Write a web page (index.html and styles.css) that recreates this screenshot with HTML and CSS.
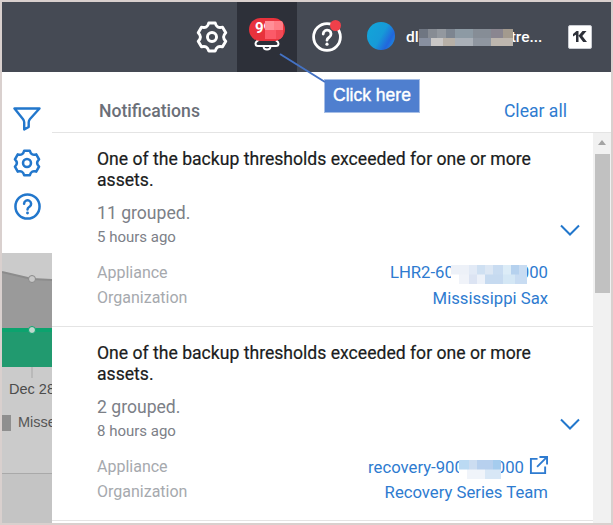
FILE: index.html
```html
<!DOCTYPE html>
<html lang="en">
<head>
<meta charset="utf-8">
<title>Notifications</title>
<link rel="stylesheet" href="styles.css">
</head>
<body>
<svg class="defs" width="0" height="0" aria-hidden="true">
  <defs>
    <symbol id="gear" viewBox="0 0 24 24">
      <path fill="none" stroke="currentColor" stroke-width="2.2" stroke-linejoin="round" d="M9.570 1.480L14.430 1.480Q15.500 5.940 19.900 4.630L22.330 8.840Q19 12 22.330 15.160L19.900 19.370Q15.500 18.060 14.430 22.520L9.570 22.520Q8.500 18.060 4.100 19.370L1.670 15.160Q5 12 1.670 8.840L4.100 4.630Q8.500 5.940 9.570 1.480Z"/>
      <circle cx="12" cy="12" r="3.400" fill="none" stroke="currentColor" stroke-width="2.200"/>
    </symbol>
    <symbol id="help" viewBox="0 0 30 30">
      <circle cx="15" cy="15" r="13.400" fill="none" stroke="currentColor" stroke-width="2.800"/>
      <path fill="none" stroke="currentColor" stroke-width="2.800" stroke-linecap="round" d="M11.200 12a3.900 3.900 0 1 1 6 3.300c-1.400.9-2.200 1.500-2.200 2.900"/>
      <circle cx="15" cy="22.200" r="1.600" fill="currentColor"/>
    </symbol>
    <symbol id="chev" viewBox="0 0 20 12">
      <path fill="none" stroke="currentColor" stroke-width="2" d="M1 1.500l9 9 9-9"/>
    </symbol>
  </defs>
</svg>

<div class="frame">
  <header class="topbar">
    <svg class="top-gear"><use href="#gear"/></svg>
    <div class="bell-cell">
      <svg class="bell" viewBox="0 0 30 20">
        <path fill="none" stroke="#fff" stroke-width="2" d="M8 2V5C8 7 3.500 8 3.500 10.500 3.500 12.500 5 13 6 13H24C25 13 26.500 12.500 26.500 10.500 26.500 8 22 7 22 5V2"/>
        <path fill="none" stroke="#fff" stroke-width="1.800" d="M11.500 13.500c0 4 7 4 7 0"/>
      </svg>
      <span class="badge">99<span class="badge-blur"></span></span>
    </div>
    <div class="help-wrap">
      <svg class="top-help"><use href="#help"/></svg>
      <span class="help-dot"></span>
    </div>
    <span class="avatar"></span>
    <span class="user">dl<span class="mask mask-user"></span>tre...</span>
    <span class="logo">
      <svg viewBox="0 0 14 11" width="14" height="11"><path fill="#2d3039" d="M0 3L3.500 0H5.500V11H3V3.800L0 5.600zM5.500 4.800L9.500 0H13.500L9.300 4.900 14 11H10.200z"/></svg>
    </span>
  </header>

  <div class="body">
    <aside class="side">
      <div class="side-tools">
        <svg class="tool-funnel" viewBox="0 0 28 24"><path fill="none" stroke="currentColor" stroke-width="2.400" stroke-linejoin="round" d="M1.500 1.500h25L17 12c-1 1.200-1.300 2-1.300 3.200V20l-4.500 2.500v-7.300c0-1.200-.4-2-1.300-3.200z"/></svg>
        <svg class="tool-gear"><use href="#gear"/></svg>
        <svg class="tool-help"><use href="#help"/></svg>
      </div>
      <div class="chart">
        <svg class="plot" viewBox="0 0 50 125" width="50" height="125">
          <path fill="#9a9a9a" d="M0 19L30 26 50 27V77H0z"/>
          <path fill="none" stroke="#8c8c8c" stroke-width="2" d="M0 19L30 26 50 27"/>
          <rect y="75" width="50" height="39" fill="#219a6f"/>
          <rect y="75" width="50" height="4" fill="#0ca36e"/>
          <circle cx="30" cy="26" r="3.500" fill="#c8c8c8" stroke="#8a8a8a"/>
          <circle cx="30" cy="77" r="3.500" fill="#c0d8ce" stroke="#0ca36e"/>
          <rect x="29.500" y="114" width="1" height="11" fill="#a8a8a8"/>
        </svg>
        <div class="axis">Dec 28</div>
        <div class="legend"><span class="swatch"></span><span>Missed</span></div>
        <div class="chart-foot"></div>
      </div>
    </aside>

    <main class="panel">
      <div class="panel-head">
        <span class="panel-title">Notifications</span>
        <a class="clear">Clear all</a>
      </div>
      <div class="panel-body">
        <div class="list">
          <article class="item">
            <div class="item-main">
              <p class="msg">One of the backup thresholds exceeded for one or more assets.</p>
              <p class="grouped">11 grouped.</p>
              <p class="time">5 hours ago</p>
              <dl class="meta">
                <dt>Appliance</dt>
                <dd>LHR2-60<span class="mask mask-a"></span>000</dd>
                <dt>Organization</dt>
                <dd>Mississippi Sax</dd>
              </dl>
            </div>
            <svg class="chev"><use href="#chev"/></svg>
          </article>
          <article class="item">
            <div class="item-main">
              <p class="msg">One of the backup thresholds exceeded for one or more assets.</p>
              <p class="grouped">2 grouped.</p>
              <p class="time">8 hours ago</p>
              <dl class="meta">
                <dt>Appliance</dt>
                <dd>recovery-900<span class="mask mask-b"></span>000<svg class="ext" viewBox="0 0 20 20"><path fill="none" stroke="currentColor" stroke-width="2" d="M9 3H2v15h15v-7M11 1h8v8M19 1L8.500 11.500"/></svg></dd>
                <dt>Organization</dt>
                <dd>Recovery Series Team</dd>
              </dl>
            </div>
            <svg class="chev"><use href="#chev"/></svg>
          </article>
        </div>
        <div class="scroll">
          <span class="scroll-up"></span>
          <span class="scroll-thumb"></span>
        </div>
      </div>
    </main>
  </div>

  <div class="callout">Click here</div>
  <svg class="callout-line" viewBox="0 0 50 32" width="50" height="32"><path d="M1 1L46 29" stroke="#4472c4" stroke-width="2"/></svg>
</div>
</body>
</html>
```

FILE: styles.css
```css
* { box-sizing: border-box; }
html, body { margin: 0; padding: 0; }
body { font-family: Roboto, "Liberation Sans", sans-serif; }
.defs { position: absolute; }
p, dl, dd, dt { margin: 0; }

.frame {
  position: relative;
  width: 613px;
  height: 525px;
  padding: 2px;
  background: #d9d0ce;
  display: flex;
  flex-direction: column;
  overflow: hidden;
}

.topbar {
  flex: none;
  height: 70px;
  background: #454a54;
  color: #fff;
  display: flex;
  align-items: center;
}
.top-gear { width: 32px; height: 32px; margin-left: 194px; }
.bell-cell {
  position: relative;
  width: 60px;
  height: 70px;
  margin-left: 9px;
  background: #2d3039;
}
.bell { position: absolute; left: 15px; top: 31px; width: 30px; height: 20px; }
.badge {
  position: absolute;
  left: 12px;
  top: 16px;
  width: 36px;
  height: 23px;
  padding-left: 6px;
  border-radius: 12px;
  background: #e8323c;
  color: #fff;
  font-size: 15px;
  font-weight: 700;
  line-height: 20px;
  overflow: hidden;
}
.badge-blur {
  position: absolute;
  left: 16px;
  top: 3px;
  width: 18px;
  height: 18px;
  background:
    linear-gradient(90deg, #ff8f97 0 50%, #ff7d85 50%) top / 100% 50% no-repeat,
    linear-gradient(90deg, #fb5a68 0 60%, #f24a56 60%) bottom / 100% 50% no-repeat;
}
.help-wrap { position: relative; width: 30px; height: 30px; margin-left: 15px; margin-bottom: 1px; }
.top-help { display: block; width: 30px; height: 30px; }
.help-dot {
  position: absolute;
  left: 18px;
  top: -2px;
  width: 11px;
  height: 11px;
  border-radius: 50%;
  background: #f0404a;
}
.avatar {
  width: 28px;
  height: 28px;
  margin-left: 25px;
  margin-bottom: 2px;
  border-radius: 50%;
  background: linear-gradient(120deg, #12a6d8 0%, #169ad8 50%, #2266dd 75%, #17a0dd 100%);
}
.user {
  margin-left: 11px;
  width: 142px;
  font-size: 15.500px;
  font-weight: 500;
  white-space: nowrap;
  display: flex;
  align-items: center;
}
.logo {
  width: 24px;
  height: 24px;
  margin-left: 20px;
  margin-bottom: 1px;
  background: #fff;
  border: 1px solid #c9ccd2;
  border-radius: 2px;
  display: flex;
  align-items: center;
  justify-content: center;
}

.mask { position: relative; display: inline-block; vertical-align: middle; }
.mask-user {
  width: 94px;
  height: 17px;
  margin-right: -2px;
  background:
    linear-gradient(90deg, #6f7682 0 9px, #878c94 9px 18px, #93989f 18px 27px, #7d8590 27px 36px, #8d9aa4 36px 54px, #868d96 54px 72px, #8a8690 72px 84px, #a39a8e 84px) top / 100% 55% no-repeat,
    linear-gradient(90deg, #8890a0 0 12px, #c9c7c6 12px 24px, #b7b0a7 24px 36px, #aab0b8 36px 54px, #8f96a0 54px 72px, #bdb6ae 72px);
}
.mask-a {
  width: 76px;
  height: 19px;
  margin: 0 -7px 0 -3px;
  background:
    linear-gradient(90deg, #edf1f8 0 18px, #e2eaf6 18px 26px, #cfe0f2 26px 34px, #dce7f4 34px 42px, #c9dcf1 42px 52px, #dcecf7 52px 60px, #b5d1ee 60px 68px, #c8dcf2 68px) top / 100% 50% no-repeat,
    linear-gradient(90deg, #fff 0 8px, #f0f3f9 8px 18px, #dce4f3 18px 26px, #ecf1f9 26px 34px, #c6daf0 34px 52px, #d4e7f5 52px 64px, #c8dcf2 64px);
}
.mask-b {
  width: 42px;
  height: 19px;
  margin: 0 -5px;
  background:
    linear-gradient(90deg, #bbdaf3 0 10px, #ccddf1 10px 18px, #b7d0ee 18px 34px, #a5ccee 34px) top / 100% 50% no-repeat,
    linear-gradient(90deg, #fff 0 8px, #f0f4fa 8px 26px, #d8e7f6 26px);
}

.body { flex: 1; min-height: 0; display: flex; }
.side { flex: none; width: 50px; background: #fff; display: flex; flex-direction: column; }
.side-tools {
  flex: none;
  height: 181px;
  padding-top: 35px;
  display: flex;
  flex-direction: column;
  align-items: center;
  color: #2277cc;
}
.tool-funnel { flex: none; width: 28px; height: 24px; }
.tool-gear { flex: none; width: 28px; height: 28px; margin-top: 18px; }
.tool-help { flex: none; width: 27px; height: 27px; margin-top: 16px; }

.chart {
  flex: 1;
  min-height: 0;
  background: #cbcbcb;
  display: flex;
  flex-direction: column;
  color: #4c4c4c;
  font-family: "Liberation Sans", sans-serif;
  font-size: 14.500px;
  overflow: hidden;
  white-space: nowrap;
}
.plot { flex: none; display: block; }
.axis { margin: 1px 0 0 7px; line-height: 20px; }
.legend { margin-top: 15px; display: flex; gap: 7px; align-items: center; color: #555; line-height: 17px; }
.swatch { flex: none; width: 9px; height: 16px; background: #8f8f8f; }
.chart-foot { flex: 1; margin-top: 42px; background: #c4c4c4; border-top: 1px solid #a9a9a9; }

.panel { flex: 1; min-width: 0; background: #fff; display: flex; flex-direction: column; }
.panel-head {
  flex: none;
  height: 61px;
  padding: 0 44px 11px 47px;
  border-bottom: 1px solid #e4e4e4;
  display: flex;
  justify-content: space-between;
  align-items: flex-end;
}
.panel-title { font-size: 17.600px; font-weight: 500; color: #6b6f78; line-height: 20px; }
.clear { font-size: 17.600px; color: #2e7bd0; line-height: 20px; }

.panel-body { flex: 1; min-height: 0; display: flex; }
.list { flex: 1; min-width: 0; overflow: hidden; }
.item {
  height: 194px;
  padding: 0 13px 0 45px;
  border-bottom: 1px solid #e4e4e4;
  display: flex;
  align-items: center;
  gap: 12px;
}
.item-main { flex: 1; min-width: 0; align-self: flex-start; padding-top: 16px; }
.msg { font-size: 17.600px; font-weight: 400; line-height: 21px; color: #1a1c20; -webkit-text-stroke: 0.2px #1a1c20; }
.grouped { margin-top: 12px; font-size: 17.600px; line-height: 20px; color: #7c8087; }
.time { margin-top: 4px; font-size: 15px; line-height: 20px; color: #7c8087; }
.meta {
  margin-top: 13px;
  display: grid;
  grid-template-columns: auto 1fr;
  grid-auto-rows: 25px;
  align-items: center;
  font-size: 16px;
}
.meta dt { color: #a6a9ae; }
.meta dd {
  padding-top: 2px;
  color: #2e7bd0;
  font-size: 16.700px;
  text-align: right;
  white-space: nowrap;
}
.ext { width: 19px; height: 19px; margin-left: 5px; vertical-align: -2px; }
.chev { flex: none; width: 20px; height: 12px; color: #2277cc; }

.scroll { position: relative; flex: none; width: 18px; background: #f1f1f1; padding-top: 21px; }
.scroll-up {
  position: absolute;
  left: 5px;
  top: 7px;
  width: 0;
  height: 0;
  border: 4.500px solid transparent;
  border-top: 0;
  border-bottom: 5px solid #a3a3a3;
}
.scroll-thumb { display: block; margin: 0 1px 0 2px; height: 139px; background: #c1c1c1; }

.callout {
  position: absolute;
  left: 324px;
  top: 79px;
  width: 96px;
  height: 34px;
  background: #4f7fcf;
  border: 1px solid #a6bee6;
  color: #fff;
  font-family: "Liberation Sans", sans-serif;
  font-size: 17.500px;
  font-weight: 400;
  line-height: 31px;
  text-align: center;
  -webkit-text-stroke: 0.4px #fff;
}
.callout-line { position: absolute; left: 279px; top: 53px; }
```
